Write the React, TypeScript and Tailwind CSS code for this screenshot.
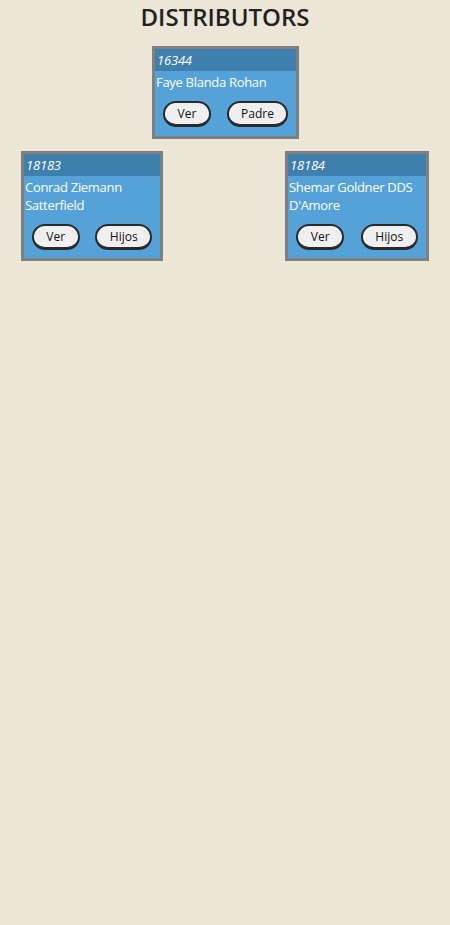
import React from "react";

type Node = {
  id: string;
  name: string;
  action: string;
  width: string;
};

const font = { fontFamily: '"Open Sans", "Noto Sans", sans-serif' };

const DistributorCard: React.FC<{ node: Node; tight?: boolean }> = ({ node, tight }) => (
  <div className={`${node.width} border-[3px] border-[#808080] bg-[#54a2d8]`}>
    <div className="bg-[#3f7fae] px-[2px] h-[22px] flex items-center">
      <span className="text-[13px] italic text-white leading-none tracking-[-0.2px]">{node.id}</span>
    </div>
    <div className="px-[1px] pt-[2px] text-[13px] leading-[18px] text-white tracking-[-0.3px]">
      {node.name}
    </div>
    <div className={`flex justify-around pt-[10px] ${tight ? "pb-[8px]" : "pb-[9px]"}`}>
      <button className="h-[26px] w-[48px] rounded-full border-2 border-[#2a2a2a] border-b-[3px] bg-[#efefef] text-[12px] text-[#111]">
        Ver
      </button>
      <button
        className={`h-[26px] ${node.action === "Padre" ? "w-[61px]" : "w-[57px]"} rounded-full border-2 border-[#2a2a2a] border-b-[3px] bg-[#efefef] text-[12px] text-[#111]`}
      >
        {node.action}
      </button>
    </div>
  </div>
);

const App: React.FC = () => {
  const root: Node = { id: "16344", name: "Faye Blanda Rohan", action: "Padre", width: "w-[147px]" };
  const children: Node[] = [
    { id: "18183", name: "Conrad Ziemann Satterfield", action: "Hijos", width: "w-[142px]" },
    { id: "18184", name: "Shemar Goldner DDS D'Amore", action: "Hijos", width: "w-[144px]" },
  ];

  return (
    <div className="min-h-[925px] bg-[#ece6d7]" style={font}>
      <h1 className="text-center text-[24px] leading-[33px] font-semibold text-[#222]">
        DISTRIBUTORS
      </h1>
      <div className="flex justify-center mt-[13px] pl-[1px]">
        <DistributorCard node={root} />
      </div>
      <div className="flex justify-between items-start px-[21px] mt-[12px]">
        {children.map((c) => (
          <DistributorCard key={c.id} node={c} tight />
        ))}
      </div>
    </div>
  );
};

export default App;
